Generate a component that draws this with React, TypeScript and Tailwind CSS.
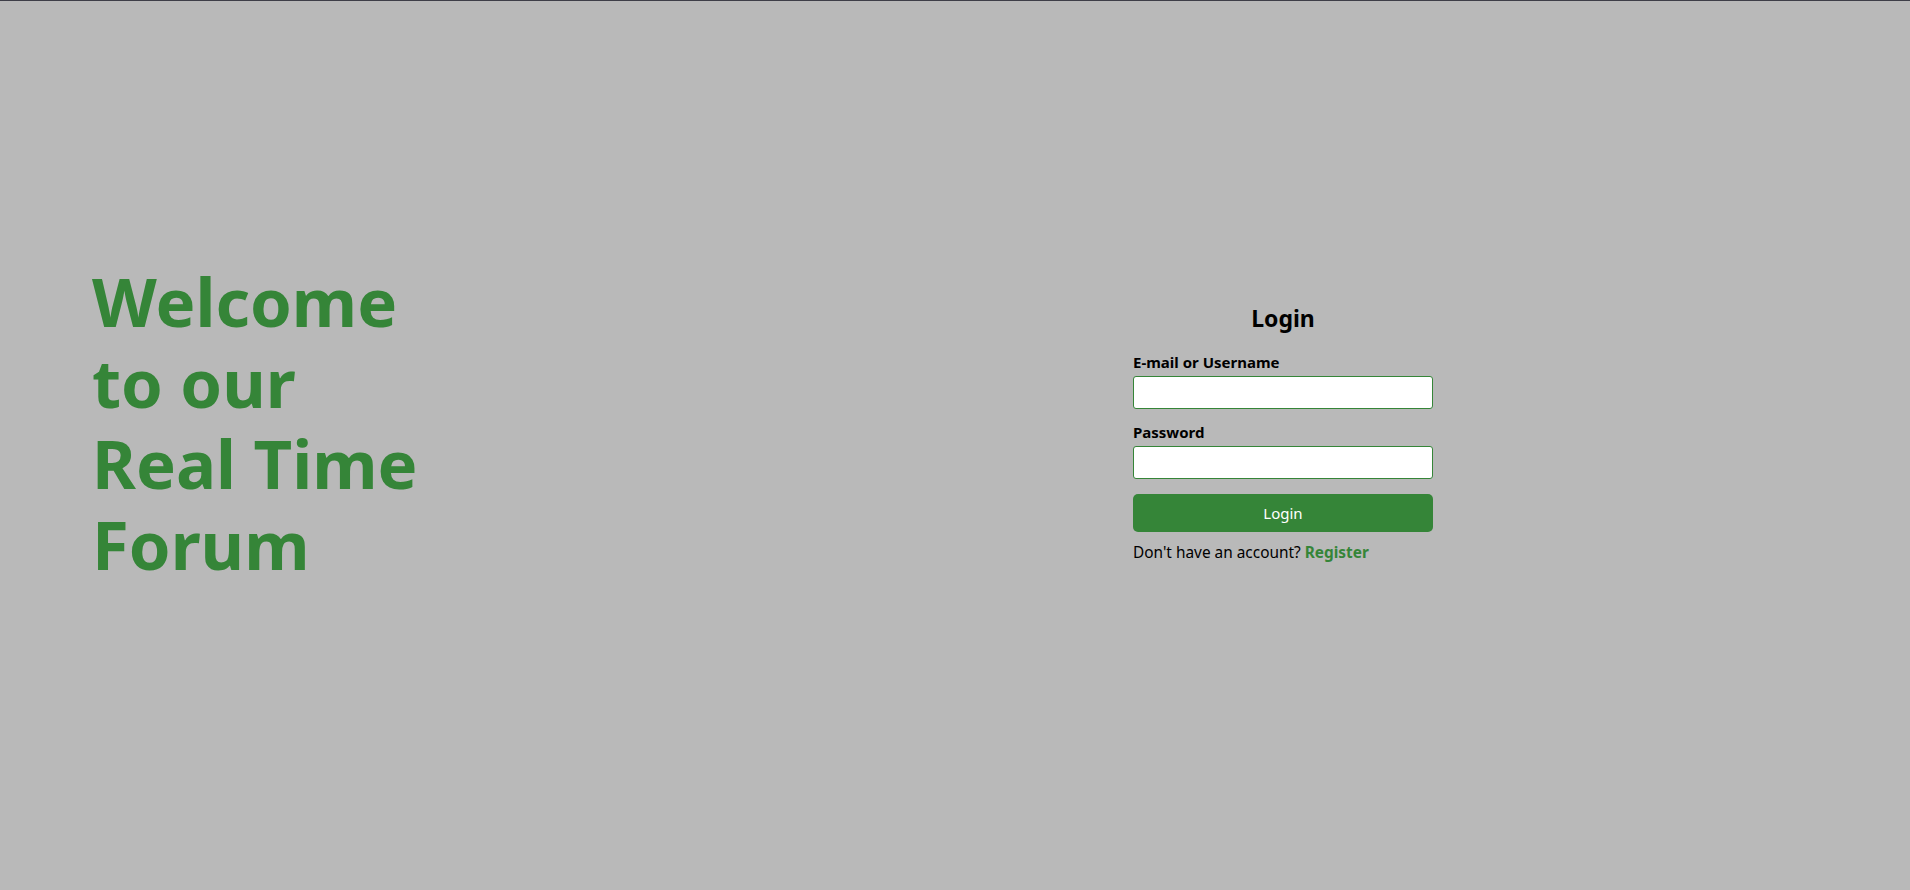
const GREEN = '#358538';

export default function App() {
  return (
    <div
      className="min-h-screen h-[890px] bg-[#b9b9b9] border-t border-[#3e3e48] flex items-start pt-[260px]"
      style={{ fontFamily: '"Noto Sans", "Open Sans", sans-serif' }}
    >
      {/* Left: welcome heading */}
      <div className="ml-[92px] w-[360px]">
        <h1 className="text-[67px] leading-[81px] font-bold text-[#358538]">
          <span className="block">Welcome</span>
          <span className="block">to our</span>
          <span className="block">Real Time</span>
          <span className="block">Forum</span>
        </h1>
      </div>

      {/* Right: login form */}
      <form
        className="ml-[681px] mt-[43px] w-[300px] flex flex-col text-black"
        onSubmit={(e) => e.preventDefault()}
      >
        <h2 className="text-center text-[23px] leading-[28px] font-bold">Login</h2>

        <label className="mt-[20px] text-[15px] leading-5 font-bold">E-mail or Username</label>
        <input
          type="text"
          className="mt-[4px] h-[33px] w-full bg-white border border-[#358538] rounded-[3px] px-2 outline-none"
        />

        <label className="mt-[13px] text-[15px] leading-5 font-bold">Password</label>
        <input
          type="password"
          className="mt-[4px] h-[33px] w-full bg-white border border-[#358538] rounded-[3px] px-2 outline-none"
        />

        <button
          type="submit"
          className="mt-[15px] h-[38px] w-full rounded-[5px] text-white text-[15px]"
          style={{ backgroundColor: GREEN }}
        >
          Login
        </button>

        <p className="mt-[11px] text-[15.4px] leading-5">
          Don't have an account?{' '}
          <a href="#" className="font-bold text-[#358538]">
            Register
          </a>
        </p>
      </form>
    </div>
  );
}
